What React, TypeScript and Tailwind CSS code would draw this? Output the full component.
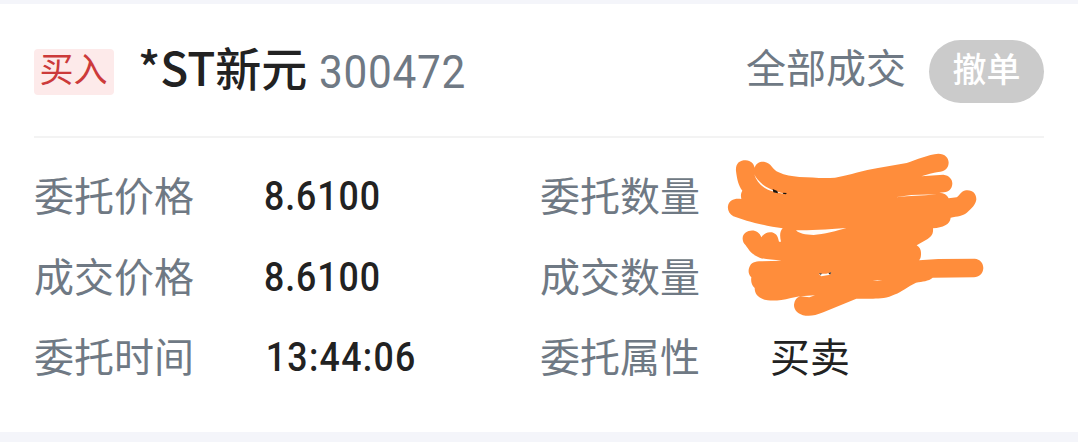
import type { ReactNode } from "react";

const cjk = "font-['Noto_Sans_CJK_SC',sans-serif]";
const num = "font-[Roboto,'Noto_Sans_CJK_SC',sans-serif]";

function Label({ children }: { children: ReactNode }) {
  return <span className={`${cjk} text-[40px] leading-[74px] text-[#6f7984]`}>{children}</span>;
}

function Value({ children, className = "tracking-[1.1px]" }: { children: ReactNode; className?: string }) {
  return (
    <span className={`${num} origin-left scale-x-[0.87] text-[41px] leading-[79px] font-medium text-[#222222] ${className}`}>
      {children}
    </span>
  );
}

function Scribble() {
  return (
    <svg
      className="absolute top-[-12px] left-[-50px] h-[180px] w-[280px]"
      viewBox="0 0 840 540"
      aria-hidden="true"
    >
      <path
        fill="#ff8d3b"
        d="M48 78C46 55 59 46 77 46C93 47 101 56 104 68C108 54 119 49 132 50C154 53 157 74 176 82C195 91 215 94 238 96C276 97 307 101 345 98C394 89 430 76 474 69L560 54C590 43 625 29 655 26C675 26 686 38 686 53C685 72 673 79 655 81C638 84 622 88 604 94L670 89C688 91 697 103 697 116C696 132 687 139 672 142L658 143C672 144 681 149 686 160L710 157C720 151 721 139 738 136C758 134 769 146 769 163C768 178 755 190 742 202C731 213 711 215 692 218C690 239 669 247 639 250C641 269 631 277 619 284L590 301C600 307 604 316 603 328C603 337 601 342 597 346L655 342L764 341C780 342 790 354 790 369C789 387 777 396 762 397L638 398C625 409 608 409 588 413C565 424 542 442 526 448C497 462 475 461 450 461L409 461L310 502C288 511 272 514 257 512C235 509 222 496 222 480C224 464 230 457 243 453L213 459C185 466 165 468 143 466C116 461 104 448 104 429C95 421 92 410 94 397C85 388 84 376 88 367C93 353 104 349 124 349L185 347C152 343 127 345 107 332C92 325 85 312 77 301C65 290 65 271 76 263C94 251 117 256 124 277C134 263 144 260 156 262C171 267 173 274 177 290L183 290C179 274 179 259 188 250C152 246 110 235 80 227L40 214C28 207 22 195 24 183C27 164 45 159 64 162C62 152 62 146 67 137C55 121 51 103 48 78Z"
      />
      <path fill="#fffdfa" d="M103 88C108 108 123 124 144 134C161 141 187 147 202 146C178 144 148 133 129 119C116 109 108 99 103 88Z" />
      <path fill="#17120e" d="M158 132L172 138L174 145L160 142ZM190 143L201 144L197 148L188 146Z" />
      <path fill="#fffdfa" d="M228 256C269 256 320 254 379 249C354 257 309 268 281 270C256 269 237 266 228 256ZM526 157L574 150L650 148L616 151L560 154ZM296 386L319 386L334 382L330 389L304 394ZM458 406L487 405L472 407ZM242 454L285 451L268 457Z" />
      <path fill="#30251c" d="M297 385L307 386L301 389ZM325 384L334 382L330 389Z" />
    </svg>
  );
}

export default function App() {
  return (
    <main className="flex h-[446px] w-[1078px] flex-col overflow-hidden bg-white">
      <div className="h-[4px] shrink-0 bg-[#f4f5fa]" />
      <section className="flex h-[428px] shrink-0 flex-col px-[34px]">
        <header className="flex h-[134px] shrink-0 items-center border-b-2 border-[#f3f3f3]">
          <span className={`${cjk} mt-[3px] flex h-[46px] w-[80px] items-center justify-center rounded-[4px] bg-[#fdeaea] pr-[1px] pb-[9px] text-[34px] leading-[37px] text-[#cc3a3a]`}>
            买入
          </span>
          <h1 className={`${cjk} ml-[24px] pb-[8px] text-[46px] leading-[60px] font-medium text-[#222222]`}>*ST新元</h1>
          <span className={`${num} mt-[4px] ml-[12px] origin-left scale-x-[0.92] text-[46px] leading-[60px] font-normal tracking-[0.8px] text-[#6f7984]`}>
            300472
          </span>
          <span className={`${cjk} ml-auto pb-[8px] text-[40px] leading-[60px] text-[#6f7984]`}>全部成交</span>
          <button className={`${cjk} mt-[3px] ml-[23px] flex h-[63px] w-[115px] items-center justify-center rounded-full bg-[#cbcbcb] pb-[7px] text-[34px] leading-[40px] font-medium text-white`}>
            撤单
          </button>
        </header>
        <div className="grid grid-cols-[230px_276px_230px_1fr] grid-rows-[81px_80px_80px] pt-[19px]">
          <Label>委托价格</Label>
          <Value>8.6100</Value>
          <Label>委托数量</Label>
          <div className="relative">
            <Scribble />
          </div>
          <Label>成交价格</Label>
          <Value>8.6100</Value>
          <Label>成交数量</Label>
          <span />
          <Label>委托时间</Label>
          <Value className="pl-[2px] tracking-[1.5px]">13:44:06</Value>
          <Label>委托属性</Label>
          <span className={`${cjk} text-[40px] leading-[74px] text-[#222222]`}>买卖</span>
        </div>
      </section>
      <div className="h-[10px] shrink-0 bg-[#f4f5fa]" />
    </main>
  );
}
